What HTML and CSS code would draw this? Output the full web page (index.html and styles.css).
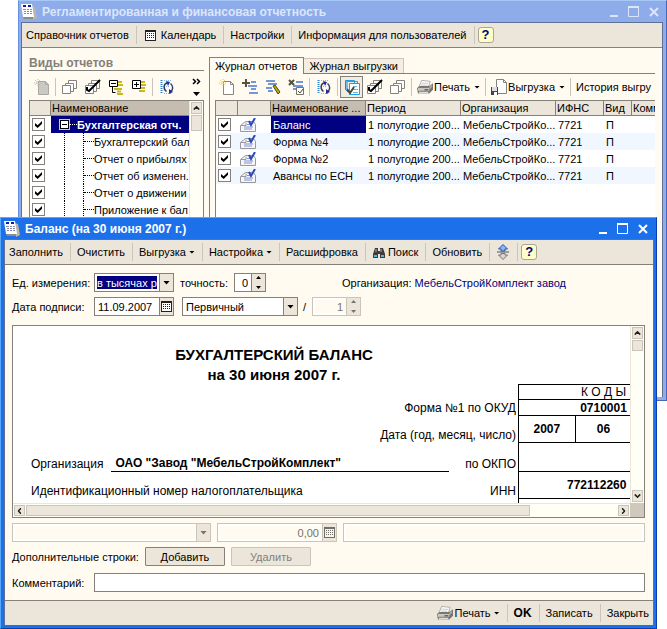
FILE: index.html
```
<!DOCTYPE html>
<html lang="ru">
<head>
<meta charset="utf-8">
<title>Баланс (на 30 июня 2007 г.)</title>
<link rel="stylesheet" href="styles.css">
</head>
<body>
<svg class="defs" aria-hidden="true">
  <symbol id="i-app" viewBox="0 0 16 16"><path d="M10 2l4 1 2 11-4 2z" fill="#b9b6aa"/><path d="M2 13h10v2H3z" fill="#8c8c86"/><path d="M0 0h11l2 13H2z" fill="#fff"/><path d="M2 2h3M7 2h3" stroke="#0a1ea8" stroke-width="2"/><path d="M2 5.500h3M6 5.500h2M9 5.500h2M3 7.500h2M6 7.500h2M9 7.500h2M3 9.500h2M6 9.500h2M9 9.500h2" stroke="#88a"/></symbol>
  <symbol id="i-cal" viewBox="0 0 11 11"><path d="M0 0h11v11H0z" fill="#222"/><path d="M1 2h9v8H1z" fill="#fff"/><path d="M2 3h1v1H2zM4 3h1v1H4zM6 3h1v1H6zM8 3h1v1H8zM2 5h1v1H2zM4 5h1v1H4zM6 5h1v1H6zM8 5h1v1H8zM2 7h1v1H2zM4 7h1v1H4zM6 7h1v1H6zM8 7h1v1H8z" fill="#222"/></symbol>
  <symbol id="i-new" viewBox="0 0 16 16"><path d="M4.500 2.500h7l3 3v10h-10z" fill="#fff" stroke="#8a8778"/><path d="M11.500 2.500v3h3" fill="none" stroke="#8a8778"/><path d="M4 0v7M0 4h7M1 1l6 6M6 1L1 6" stroke="#e3c94a" stroke-dasharray="1 1"/></symbol>
  <symbol id="i-newgray" viewBox="0 0 16 16"><path d="M4.500 2.500h7l3 3v10h-10z" fill="#cbc9c4" stroke="#aaa8a2"/><path d="M11.500 2.500v3h3" fill="none" stroke="#aaa"/><path d="M4 0v7M0 4h7M1 1l5 5M6 1L1 6" stroke="#bbb5a6" stroke-dasharray="1 1"/></symbol>
  <symbol id="i-copy" viewBox="0 0 16 16"><g fill="#fff" stroke="#85837a"><path d="M6.500 1.500h8v8h-8z"/><path d="M3.500 4.500h8v8h-8z"/><path d="M.5 6.500h8v8h-8z"/></g></symbol>
  <symbol id="i-checks" viewBox="0 0 16 16"><g fill="#fff" stroke="#85837a"><path d="M6.500 1.500h8v8h-8z"/><path d="M3.500 4.500h8v8h-8z"/><path d="M.5 6.500h8v8h-8z"/></g><path d="M2 8v3l2 1L15 1" fill="none" stroke="#000" stroke-width="2"/></symbol>
  <symbol id="i-minus" viewBox="0 0 16 16"><path d="M10 3h4M10 6h5M6 10h8M9 12.500h4M9 15h6" stroke="#c8b820" stroke-width="2"/><path d="M1.500 1.500h8v6h-8z" fill="#fff" stroke="#000"/><path d="M3 4.500h5M4.500 8v5.500h3" fill="none" stroke="#000"/></symbol>
  <symbol id="i-plus" viewBox="0 0 16 16"><path d="M10 3h4M10 6h5M7 9h7M8 12h6" stroke="#c8b820" stroke-width="2"/><path d="M1.500 1.500h8v8h-8z" fill="#fff" stroke="#000"/><path d="M3 5.500h5M5.500 3v5" stroke="#000"/></symbol>
  <symbol id="i-refresh" viewBox="0 0 16 16"><path d="M2.500 1v14" stroke="#2585d8" stroke-width="2" stroke-dasharray="1 1"/><path d="M5 1.500h7M5 14.500h7M5 7.500h5" stroke="#8bb5dd" stroke-dasharray="1 1"/><path d="M7.500 12.500C4 10 4.500 5 8 4M11 13C14.500 11 14.500 7 11.500 4.500" fill="none" stroke="#354064" stroke-width="1.500"/><path d="M7 2l4 1-2 4zM10 10v5l4-2z" fill="#1e2ba5"/></symbol>
  <symbol id="i-add" viewBox="0 0 16 16"><path d="M9 3h5M6 7h9M9 10h5M7 14h9" stroke="#7597d8" stroke-width="2"/><path d="M4 0v8M0 4h8" stroke="#55533f" stroke-width="2"/></symbol>
  <symbol id="i-edit" viewBox="0 0 16 16"><path d="M1 2h9M3 5h9M1 9h6M3 12h5" stroke="#7597d8" stroke-width="2"/><path d="M8 7l2-1 5 7-2 2z" fill="#bfa900" stroke="#4b4828"/></symbol>
  <symbol id="i-del" viewBox="0 0 16 16"><path d="M8 3h7M5 7h10M5 10h3" stroke="#7597d8" stroke-width="2"/><path d="M1 1l5 5M6 1L1 6" stroke="#55533f" stroke-width="2"/><path d="M8.500 8.500h7v7h-7z" fill="#fff" stroke="#777464"/><path d="M10 12l2 2 3-4" fill="none" stroke="#444"/></symbol>
  <symbol id="i-sheets" viewBox="0 0 16 16"><path d="M1.500 1.500h9v10M3.500 2.500h10v11" fill="none" stroke="#269de0"/><path d="M1.500 1.500v9l3 3M3 1v9" stroke="#1788d8" fill="none"/><path d="M5.500 4.500h10v11h-10z" fill="#fff" stroke="#269de0"/><path d="M9 7.500h4M9 10.500h5M9 13.500h5" stroke="#63b8e8"/><path d="M3 10l3 4 4-6" fill="none" stroke="#4c4936" stroke-width="2"/></symbol>
  <symbol id="i-print" viewBox="0 0 17 16"><path d="M5 1l9 1-2 6H2z" fill="#fff" stroke="#aaa"/><path d="M5 4h7M4 6h7" stroke="#c6c6c6"/><path d="M0 9l3-2h10l4-3v7l-4 4H1z" fill="#77756e"/><path d="M1 9h12v3H1z" fill="#c9c7c2"/><path d="M13 8l3-3v3l-3 3z" fill="#aaa8a4"/><path d="M2 13h10v2H2z" fill="#dedcd6"/><path d="M8 11h4" stroke="#333"/></symbol>
  <symbol id="i-disk" viewBox="0 0 16 16"><path d="M5.500.5h7l3 3v11h-10z" fill="#fff" stroke="#85837a"/><path d="M12.500.5v3h3" fill="none" stroke="#85837a"/><path d="M0 8h7v8H0z" fill="#444"/><path d="M1 8h5v4H1z" fill="#ddd"/><path d="M3 13h3v3H3z" fill="#fff"/></symbol>
  <symbol id="i-doc" viewBox="0 0 16 14"><path d="M.5 7.500l5-4h8l2 3v7H.5z" fill="#f5f5fa" stroke="#98979d"/><path d="M1 7.500h5v-3" fill="none" stroke="#98979d"/><path d="M7 6.500h5M4 9h9M4 11h8" stroke="#8494ce"/><path d="M9 3l2 4 4-7" fill="none" stroke="#2848b8" stroke-width="2"/></symbol>
  <symbol id="i-find" viewBox="0 0 12 11"><path d="M2 1h3v3h2V1h3l2 6v4H7V7H5v4H0V7z" fill="#3f3a3d"/><path d="M1 8h3v2H1zM8 8h3v2H8z" fill="#55b6df"/><path d="M3 2v3M8 2v3" stroke="#b7aaaa"/></symbol>
  <symbol id="i-updown" viewBox="0 0 14 16"><path d="M7 .5l4.500 4.500H9v2H5V5H2.500z" fill="#8eb4f4" stroke="#2854a8"/><path d="M1 8h12" stroke="#555"/><path d="M7 15.500l4.500-4.500H9V9.500H5V11H2.500z" fill="#d6d6d6" stroke="#777"/></symbol>
  <symbol id="i-min" viewBox="0 0 12 12"><path d="M2 10h8" stroke="currentColor" stroke-width="2"/></symbol>
  <symbol id="i-max" viewBox="0 0 12 12"><path d="M.5 1.500h10v9H.5z" fill="none" stroke="currentColor"/><path d="M0 1h11" stroke="currentColor" stroke-width="2"/></symbol>
  <symbol id="i-close" viewBox="0 0 12 12"><path d="M2 2l8 8M10 2l-8 8" stroke="currentColor" stroke-width="2"/></symbol>
  <symbol id="i-up" viewBox="0 0 9 5"><path d="M1 4.500l3.500-3.500L8 4.500" fill="none" stroke="#222" stroke-width="2"/></symbol>
</svg>

<main class="desktop">
  <section class="window back">
    <header class="titlebar">
      <svg class="ico"><use href="#i-app"/></svg>
      <h1>Регламентированная и финансовая отчетность</h1>
      <button class="cap" aria-label="Свернуть"><svg><use href="#i-min"/></svg></button>
      <button class="cap" aria-label="Развернуть"><svg><use href="#i-max"/></svg></button>
      <button class="cap" aria-label="Закрыть окно"><svg><use href="#i-close"/></svg></button>
    </header>
    <div class="client">
      <nav class="bar">
        <button>Справочник отчетов</button><i class="sep"></i>
        <button><svg class="cal"><use href="#i-cal"/></svg>Календарь</button><i class="sep"></i>
        <button>Настройки</button><i class="sep"></i>
        <button>Информация для пользователей</button><i class="sep"></i>
        <button class="help">?</button>
      </nav>
      <div class="split">
        <section class="kinds">
          <h2>Виды отчетов</h2>
          <div class="tools">
            <button class="tool" aria-label="Новый" disabled><svg class="ico"><use href="#i-newgray"/></svg></button><i class="sep"></i>
            <button class="tool" aria-label="Снять флажки"><svg class="ico"><use href="#i-copy"/></svg></button>
            <button class="tool" aria-label="Установить флажки"><svg class="ico"><use href="#i-checks"/></svg></button>
            <button class="tool" aria-label="Свернуть все"><svg class="ico"><use href="#i-minus"/></svg></button>
            <button class="tool" aria-label="Развернуть все"><svg class="ico"><use href="#i-plus"/></svg></button><i class="sep"></i>
            <button class="tool" aria-label="Обновить"><svg class="ico"><use href="#i-refresh"/></svg></button>
            <button class="more" aria-label="Еще"><svg viewBox="0 0 9 18"><path d="M1 1l2.500 2.500L1 6M5 1l2.500 2.500L5 6" fill="none" stroke="#000" stroke-width="1.500"/><path d="M1 14h7l-3.500 4z"/></svg></button>
          </div>
          <div class="treebox">
            <table class="tree">
              <colgroup><col class="c-mark"><col></colgroup>
              <thead><tr><th></th><th class="cur">Наименование</th></tr></thead>
              <tbody>
                <tr class="root"><td><input type="checkbox" checked aria-label="Бухгалтерская отчетность"></td><td><div class="node"><i class="box"></i><i class="dash"></i>Бухгалтерская отч.</div></td></tr>
                <tr><td><input type="checkbox" checked aria-label="Бухгалтерский баланс"></td><td><div class="node"><i class="l1"></i><i class="l2"></i><i class="dash"></i>Бухгалтерский бал</div></td></tr>
                <tr><td><input type="checkbox" checked aria-label="Отчет о прибылях"></td><td><div class="node"><i class="l1"></i><i class="l2"></i><i class="dash"></i>Отчет о прибылях</div></td></tr>
                <tr><td><input type="checkbox" checked aria-label="Отчет об изменениях"></td><td><div class="node"><i class="l1"></i><i class="l2"></i><i class="dash"></i>Отчет об изменен.</div></td></tr>
                <tr><td><input type="checkbox" checked aria-label="Отчет о движении"></td><td><div class="node"><i class="l1"></i><i class="l2"></i><i class="dash"></i>Отчет о движении</div></td></tr>
                <tr><td><input type="checkbox" checked aria-label="Приложение к балансу"></td><td><div class="node"><i class="l1"></i><i class="l2"></i><i class="dash"></i>Приложение к бал</div></td></tr>
              </tbody>
            </table>
            <div class="vscroll"><button class="sb" aria-label="Вверх"><svg><use href="#i-up"/></svg></button><span class="thumb"></span></div>
          </div>
        </section>
        <section class="journal">
          <div class="tabs"><button class="tab on">Журнал отчетов</button><button class="tab">Журнал выгрузки</button></div>
          <div class="page">
            <div class="tools">
              <button class="tool" aria-label="Новый отчет"><svg class="ico"><use href="#i-new"/></svg></button>
              <button class="tool" aria-label="Добавить отчет"><svg class="ico"><use href="#i-add"/></svg></button>
              <button class="tool" aria-label="Изменить"><svg class="ico"><use href="#i-edit"/></svg></button>
              <button class="tool" aria-label="Пометить"><svg class="ico"><use href="#i-del"/></svg></button><i class="sep"></i>
              <button class="tool" aria-label="Обновить"><svg class="ico"><use href="#i-refresh"/></svg></button><i class="sep"></i>
              <button class="tool pressed" aria-label="Выбранные виды"><svg class="ico"><use href="#i-sheets"/></svg></button>
              <button class="tool" aria-label="Установить флажки"><svg class="ico"><use href="#i-checks"/></svg></button>
              <button class="tool" aria-label="Снять флажки"><svg class="ico"><use href="#i-copy"/></svg></button><i class="sep"></i>
              <button class="txt"><svg class="ico"><use href="#i-print"/></svg>Печать<b class="arr"></b></button><i class="sep"></i>
              <button class="txt"><svg class="ico"><use href="#i-disk"/></svg>Выгрузка<b class="arr"></b></button><i class="sep"></i>
              <button class="txt">История выгру</button>
            </div>
            <table class="list">
              <colgroup><col class="c-chk"><col class="c-ico"><col class="c-wide"><col class="c-wide"><col class="c-wide"><col class="c-ifns"><col class="c-kind"><col></colgroup>
              <thead><tr><th></th><th></th><th class="cur">Наименование ...</th><th>Период</th><th>Организация</th><th>ИФНС</th><th>Вид</th><th>Комментарий</th></tr></thead>
              <tbody>
                <tr><td><input type="checkbox" checked aria-label="Баланс"></td><td><svg class="doc"><use href="#i-doc"/></svg></td><td class="sel">Баланс</td><td>1 полугодие 200...</td><td>МебельСтройКо...</td><td>7721</td><td>П</td><td></td></tr>
                <tr><td><input type="checkbox" checked aria-label="Форма №4"></td><td><svg class="doc"><use href="#i-doc"/></svg></td><td>Форма №4</td><td>1 полугодие 200...</td><td>МебельСтройКо...</td><td>7721</td><td>П</td><td></td></tr>
                <tr><td><input type="checkbox" checked aria-label="Форма №2"></td><td><svg class="doc"><use href="#i-doc"/></svg></td><td>Форма №2</td><td>1 полугодие 200...</td><td>МебельСтройКо...</td><td>7721</td><td>П</td><td></td></tr>
                <tr><td><input type="checkbox" checked aria-label="Авансы по ЕСН"></td><td><svg class="doc"><use href="#i-doc"/></svg></td><td>Авансы по ЕСН</td><td>1 полугодие 200...</td><td>МебельСтройКо...</td><td>7721</td><td>П</td><td></td></tr>
              </tbody>
            </table>
            <div class="blank"></div>
          </div>
        </section>
      </div>
    </div>
  </section>

  <section class="window front">
    <header class="titlebar">
      <svg class="ico"><use href="#i-app"/></svg>
      <h1>Баланс (на 30 июня 2007 г.)</h1>
      <button class="cap" aria-label="Свернуть"><svg><use href="#i-min"/></svg></button>
      <button class="cap" aria-label="Развернуть"><svg><use href="#i-max"/></svg></button>
      <button class="cap" aria-label="Закрыть окно"><svg><use href="#i-close"/></svg></button>
    </header>
    <div class="client">
      <nav class="bar">
        <button>Заполнить</button><i class="sep"></i>
        <button>Очистить</button><i class="sep"></i>
        <button>Выгрузка<b class="arr"></b></button><i class="sep"></i>
        <button>Настройка<b class="arr"></b></button><i class="sep"></i>
        <button>Расшифровка</button><i class="sep"></i>
        <button><svg class="find"><use href="#i-find"/></svg>Поиск</button><i class="sep"></i>
        <button>Обновить</button><i class="sep"></i>
        <button class="updown" aria-label="Свернуть шапку"><svg><use href="#i-updown"/></svg></button><i class="sep"></i>
        <button class="help">?</button>
      </nav>
      <form class="form">
        <div class="row">
          <label class="lead" for="unit">Ед. измерения:</label>
          <span class="field w-short"><select id="unit" class="hot"><option>в тысячах р</option></select><span class="drop"><b class="arr"></b></span></span>
          <label class="prec" for="prec">точность:</label>
          <span class="field w-prec"><input id="prec" class="num" value="0"><span class="spin"><b class="arr up"></b><b class="arr"></b></span></span>
          <span class="org">Организация: <a href="#org">МебельСтройКомплект завод</a></span>
        </div>
        <div class="row">
          <label class="lead" for="date">Дата подписи:</label>
          <span class="field w-short"><input id="date" value="11.09.2007"><button type="button" class="drop" aria-label="Выбрать дату"><svg class="cal"><use href="#i-cal"/></svg></button></span>
          <span class="field w-kind"><select aria-label="Вид отчета"><option>Первичный</option></select><span class="drop"><b class="arr"></b></span></span>
          <label class="slash" for="corr">/</label>
          <span class="field off w-corr"><input id="corr" class="num" value="1" disabled><span class="spin"><b class="arr up"></b><b class="arr"></b></span></span>
        </div>

        <div class="sheetbox">
          <div class="sheet">
            <div class="paper">
              <div class="heading"><h2>БУХГАЛТЕРСКИЙ БАЛАНС</h2><h2>на 30 июня 2007 г.</h2></div>
              <div class="labels">
                <p class="r-code">Форма №1 по ОКУД</p>
                <p class="r-date">Дата (год, месяц, число)</p>
                <p class="r-org"><span>Организация</span><strong>ОАО "Завод "МебельСтройКомплект"</strong><span class="end">по ОКПО</span></p>
                <p class="r-inn"><span>Идентификационный номер налогоплательщика</span><span class="end">ИНН</span></p>
              </div>
            </div>
            <table class="codes">
              <tr class="k-head"><th colspan="3">К О Д Ы</th></tr>
              <tr class="k-code"><td colspan="3">0710001</td></tr>
              <tr class="k-date"><td>2007</td><td>06</td><td></td></tr>
              <tr class="k-okpo"><td colspan="3"></td></tr>
              <tr class="k-inn"><td colspan="3">772112260</td></tr>
              <tr class="k-tail"><td colspan="3"></td></tr>
            </table>
          </div>
          <div class="vscroll"><button type="button" class="sb" aria-label="Вверх"><svg><use href="#i-up"/></svg></button><span class="thumb small"></span><button type="button" class="sb down" aria-label="Вниз"><svg><use href="#i-up"/></svg></button></div>
          <div class="hscroll"><button type="button" class="sb left" aria-label="Влево"><svg><use href="#i-up"/></svg></button><span class="thumb"></span><button type="button" class="sb right" aria-label="Вправо"><svg><use href="#i-up"/></svg></button></div>
          <div class="corner"></div>
        </div>

        <div class="row cells">
          <span class="field off w-cell"><select aria-label="Значение" disabled></select><span class="drop"><b class="arr"></b></span></span>
          <span class="field off w-sum"><input class="num" aria-label="Сумма" value="0,00" disabled><span class="drop"><svg class="cal"><use href="#i-cal"/></svg></span></span>
          <span class="field off grow"><input aria-label="Текст ячейки" disabled></span>
        </div>
        <div class="row extra">
          <span class="caption">Дополнительные строки:</span>
          <button type="button" class="push">Добавить</button>
          <button type="button" class="push" disabled>Удалить</button>
        </div>
        <div class="row comment">
          <label class="lead" for="note">Комментарий:</label>
          <span class="field grow"><input id="note"></span>
        </div>
      </form>
      <footer class="bar foot">
        <button><svg class="ico"><use href="#i-print"/></svg>Печать<b class="arr"></b></button><i class="sep"></i>
        <button class="ok">OK</button><i class="sep"></i>
        <button>Записать</button><i class="sep"></i>
        <button>Закрыть</button>
      </footer>
    </div>
  </section>
</main>
</body>
</html>
```
FILE: styles.css
```
:root {
  --cream: #fffbf0;
  --beige: #ebe5da;
  --line: #85807a;
  --pale: #c9c5ba;
  --navy: #000080;
}
* { box-sizing: border-box; }
body {
  margin: 0;
  background: #fff;
  font: 11px/16px "Liberation Sans", sans-serif;
  color: #000;
}
button, input, select { font: inherit; color: inherit; margin: 0; padding: 0; border: 0; background: none; border-radius: 0; min-width: 0; }
h1, h2, p { margin: 0; font-size: 12px; }
a { color: var(--navy); text-decoration: none; }
svg { display: block; flex: none; }
.defs { display: none; }
.ico { width: 16px; height: 16px; }
.cal { width: 11px; height: 11px; }
.desktop { position: relative; min-height: 100vh; overflow: hidden; }

/* windows */
.window { position: absolute; display: flex; flex-direction: column; }
.back { top: 0; left: 18px; right: 0; bottom: 228px; background: #8eabea; padding: 0 3px 3px 2px; border: 1px solid #4467b8; border-top-color: #a6c8f8; border-left-color: #6890e0; }
.front { top: 217px; left: 0; right: 10px; bottom: 0; background: #1c70ea; padding: 0 2px 3px 3px; border: 1px solid #0b3fb0; border-top-color: #58a8fa; border-left-color: #58a8fa; }
.titlebar { display: flex; align-items: center; flex: none; height: 21px; gap: 5px; padding: 0 2px 0 0; color: #fff; }
.titlebar h1 { flex: 1; font-size: 12px; line-height: 20px; white-space: nowrap; }
.front .titlebar { padding-right: 4px; }
.back .titlebar { color: #dce6fb; }
.cap { width: 15px; height: 16px; display: flex; align-items: center; justify-content: center; }
.cap svg { width: 12px; height: 12px; }
.client { flex: 1; min-height: 0; display: flex; flex-direction: column; background: var(--cream); border: 1px solid #5f6f98; border-bottom: 0; overflow: hidden; }

/* bars */
.bar { display: flex; align-items: center; flex: none; height: 25px; background: var(--beige); border-bottom: 1px solid var(--line); }
.bar button { display: flex; align-items: center; height: 22px; padding: 0 4px; white-space: nowrap; }
.sep { flex: none; width: 1px; height: 18px; background: var(--pale); margin: 0 2px; }
.bar .sep { margin: 0 2px 0 3px; }
.bar .cal { margin: 0 5px 0 2px; }
.bar .help { width: 16px; height: 16px; margin-left: 1px; padding: 0; justify-content: center; border: 1px solid #aaa690; border-radius: 3px; background: #ffffc8; color: var(--navy); font-weight: bold; font-size: 13px; }
.find { width: 12px; height: 11px; margin: 0 3px 0 1px; }
.updown svg { width: 14px; height: 16px; }
.arr { flex: none; width: 5px; height: 3px; margin-left: 3px; background: currentColor; clip-path: polygon(0 0, 100% 0, 50% 100%); }
.arr.up { clip-path: polygon(50% 0, 100% 100%, 0 100%); }
.bar .arr, .txt .arr { width: 6px; height: 3px; }

/* journal window */
.split { flex: 1; min-height: 0; display: flex; gap: 5px; padding: 9px 7px 0 7px; }
.kinds { width: 175px; flex: none; display: flex; flex-direction: column; }
.kinds h2 { flex: none; height: 14px; font-size: 12px; line-height: 12px; color: #85807a; border-bottom: 1px solid #85807a; }
.tools { display: flex; align-items: center; flex: none; height: 22px; white-space: nowrap; }
.kinds .tools { margin: 5px 0 2px 1px; }
.tool { flex: none; width: 23px; height: 22px; display: flex; align-items: center; justify-content: center; }
.pressed { border: 1px solid var(--line); background: #f1ece0; }
.more { margin-left: auto; margin-right: 3px; }
.more svg { width: 9px; height: 18px; }
.txt { flex: none; display: flex; align-items: center; gap: 1px; padding: 0 3px; }
.treebox { flex: 1; display: flex; min-height: 0; background: #fff; border: 1px solid var(--line); border-bottom: 0; overflow: hidden; }
table { border-collapse: collapse; border-spacing: 0; }
.tree, .list { border-collapse: separate; table-layout: fixed; flex: 1; min-width: 0; width: 100%; align-self: flex-start; }
.tree th, .list th { height: 15px; padding: 0 1px; background: var(--beige); border-right: 1px solid var(--line); border-bottom: 1px solid var(--line); font-weight: normal; text-align: left; line-height: 14px; white-space: nowrap; overflow: hidden; }
.tree th.cur, .list th.cur { background: #c5bdb0; }
.tree th:last-child, .list th:last-child { border-right: 0; }
.tree td, .list td { height: 17px; padding: 0 0 0 2px; line-height: 16px; white-space: nowrap; overflow: hidden; }
.tree td:last-child { padding: 0; }
.list tbody tr:nth-child(even) { background: #f1f7fe; }
.list .sel { background: var(--navy); color: #fff; }
.c-mark { width: 21px; }
.c-chk { width: 22px; }
.c-ico { width: 33px; }
.c-wide { width: 95px; }
.c-ifns { width: 48px; }
.c-kind { width: 28px; }
.doc { width: 16px; height: 14px; }
input[type="checkbox"] { appearance: none; display: block; width: 13px; height: 13px; border: 1px solid var(--line); background: #fff; }
input[type="checkbox"]:checked::before { content: ""; display: block; width: 7px; height: 7px; margin: 2px; background: #000; clip-path: polygon(0 30%, 38% 62%, 100% 0, 100% 40%, 38% 100%, 0 68%); }
.node { display: flex; align-items: center; height: 17px; }
.root .node { background: var(--navy); color: #fff; font-weight: bold; }
.box { flex: none; width: 9px; height: 9px; margin-left: 9px; border: 1px solid #000; outline: 1px solid #ccc; background: linear-gradient(#000, #000) center / 5px 1px no-repeat #fff; }
.dash { flex: none; width: 10px; border-top: 1px dotted #000; }
.root .dash { border-color: #fff; width: 8px; }
.l1, .l2 { flex: none; height: 17px; width: 14px; border-right: 1px dotted #000; }
.l2 { width: 19px; }
.journal { flex: 1; min-width: 0; display: flex; flex-direction: column; }
.tabs { display: flex; align-items: flex-end; flex: none; height: 16px; }
.tab { height: 15px; padding: 0 5px; background: #f4eee2; border: 1px solid var(--pale); border-width: 1px 1px 0 0; line-height: 14px; white-space: nowrap; }
.tab.on { position: relative; height: 17px; margin-bottom: -1px; padding: 0 6px 0 5px; background: var(--cream); border-color: var(--line); border-left-width: 1px; }
.page { flex: 1; min-height: 0; display: flex; flex-direction: column; border-left: 1px solid var(--line); border-top: 1px solid var(--line); padding: 2px 0 0 5px; overflow: hidden; }
.page .tools { margin-bottom: 2px; }
.list { flex: none; background: #fff; border-left: 1px solid var(--line); border-top: 1px solid var(--line); }
.blank { flex: 1; background: #fff; border-left: 1px solid var(--line); }

/* scroll bars */
.vscroll { flex: none; width: 14px; display: flex; flex-direction: column; background: #fffff6; border-left: 1px solid var(--beige); padding: 1px; gap: 1px; }
.hscroll { display: flex; background: #fffff6; border-top: 1px solid var(--beige); padding: 1px; gap: 1px; }
.sb { flex: none; width: 11px; height: 12px; display: flex; align-items: center; justify-content: center; background: var(--beige); border: 1px solid var(--pale); }
.sb svg { width: 7px; height: 4px; }
.sb.down { margin-top: auto; transform: rotate(180deg); }
.hscroll .sb { height: auto; }
.sb.left svg { transform: rotate(-90deg); }
.sb.right { margin-left: auto; }
.sb.right svg { transform: rotate(90deg); }
.thumb { background: var(--beige); border: 1px solid var(--pale); height: 16px; }
.thumb.small { height: 11px; }
.hscroll .thumb { width: 82%; height: auto; }

/* balance form */
.form { flex: 1; min-height: 0; display: flex; flex-direction: column; padding: 8px 8px 8px 7px; }
.row { display: flex; align-items: center; flex: none; height: 19px; white-space: nowrap; }
.row + .row { margin-top: 5px; }
.lead { flex: none; width: 82px; }
.field { display: flex; align-items: stretch; flex: none; height: 19px; background: #fff; border: 1px solid var(--line); }
.field input, .field select { flex: 1; width: 0; padding: 0 3px; appearance: none; outline: 0; }
.field .hot { background: var(--navy); color: #fff; margin: 2px; padding: 0; line-height: 12px; }
.field .num { text-align: right; }
.drop { flex: none; width: 14px; display: flex; align-items: center; justify-content: center; background: var(--beige); border-left: 1px solid var(--line); }
.drop .arr { width: 7px; height: 4px; margin: 0; }
.spin { flex: none; width: 14px; display: flex; flex-direction: column; align-items: center; justify-content: space-between; padding: 2px 0; background: var(--beige); border-left: 1px solid var(--line); }
.spin .arr { margin: 0; }
.off { background: var(--cream); border-color: var(--pale); color: #77736c; box-shadow: inset 0 0 0 2px #fff; }
.off .drop, .off .spin { border-color: var(--pale); }
.off .cal { opacity: .6; }
.w-short { width: 80px; }
.prec { margin: 0 6px; }
.w-prec { width: 32px; }
.org { margin-left: 76px; }
.w-kind { width: 116px; margin-left: 8px; }
.slash { margin: 0 6px 0 5px; }
.w-corr { width: 49px; }
.w-cell { width: 199px; }
.w-sum { width: 120px; }
.form .grow { flex: 1; }
.cells { gap: 6px; }
.push { width: 80px; height: 19px; background: var(--beige); border: 1px solid var(--line); border-radius: 1px; }
.push:disabled { color: #85807a; border-color: var(--pale); }
.form .extra { gap: 6px; }
.form .comment { margin-top: 7px; }

/* printed form */
.sheetbox { flex: 1; min-height: 0; display: grid; grid-template: minmax(0, 1fr) 14px / minmax(0, 1fr) 14px; margin: 9px 0 5px; border: 1px solid var(--line); background: #fff; }
.corner { background: #d0c8bc; }
.sheet { display: flex; overflow: hidden; min-width: 0; font-size: 12px; line-height: 15px; }
.paper { flex: 1; min-width: 0; display: flex; flex-direction: column; white-space: nowrap; }
.heading { padding: 19px 0 0 17px; text-align: center; height: 73px; }
.heading h2 { font-size: 15px; line-height: 20px; }
.labels { padding: 0 2px 0 18px; }
.labels p { display: flex; align-items: flex-end; justify-content: flex-end; }
.labels .r-code { height: 17px; }
.labels .r-date { height: 27px; }
.labels .r-org { height: 29px; }
.labels .r-inn { height: 27px; }
.labels strong { flex: 1; margin: 0 16px 0 8px; padding-left: 4px; border-bottom: 1px solid #000; }
.labels .r-inn { justify-content: space-between; }
.codes { flex: none; width: 171px; margin: 58px -59px 0 0; table-layout: fixed; align-self: flex-start; text-align: center; font-weight: bold; }
.codes th { font-weight: normal; }
.codes th, .codes td { border: 1px solid #000; padding: 0; line-height: 14px; }
.codes .k-inn td { text-align: left; padding-left: 48px; }
.k-head { height: 15px; }
.k-code { height: 16px; }
.k-date { height: 27px; }
.k-okpo { height: 29px; }
.k-inn { height: 27px; }
.k-tail { height: 20px; }

/* footer */
.foot { height: 25px; border-top: 1px solid var(--line); border-bottom: 0; justify-content: flex-end; }
.foot .ico { margin-right: 2px; }
.foot .ok { font-weight: bold; font-size: 12px; }
```
